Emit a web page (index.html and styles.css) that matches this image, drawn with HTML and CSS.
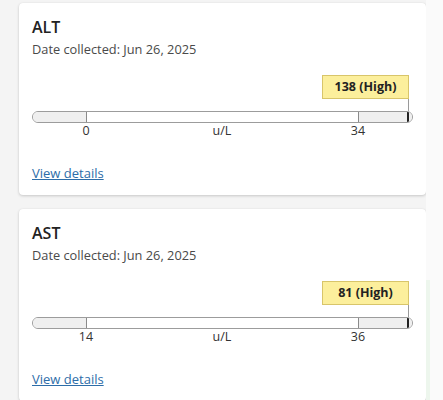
FILE: index.html
```html
<!DOCTYPE html>
<html lang="en">
<head>
<meta charset="utf-8">
<title>Lab results</title>
<link rel="stylesheet" href="styles.css">
</head>
<body>
<div class="page">
  <main class="list">
    <section class="card">
      <h2 class="title">ALT</h2>
      <p class="date">Date collected: Jun 26, 2025</p>
      <div class="gauge">
        <div class="flag-wrap">
          <div class="flag">138 (High)</div>
          <div class="stem"></div>
        </div>
        <div class="bar">
          <div class="seg seg-low"></div>
          <div class="seg seg-mid"></div>
          <div class="seg seg-high"></div>
          <div class="marker"></div>
        </div>
        <div class="labels">
          <span></span>
          <span class="tick"><span>0</span></span>
          <span class="unit">u/L</span>
          <span class="tick"><span>34</span></span>
          <span></span>
        </div>
      </div>
      <a class="details" href="#">View details</a>
    </section>
    <section class="card">
      <h2 class="title">AST</h2>
      <p class="date">Date collected: Jun 26, 2025</p>
      <div class="gauge">
        <div class="flag-wrap">
          <div class="flag">81 (High)</div>
          <div class="stem"></div>
        </div>
        <div class="bar">
          <div class="seg seg-low"></div>
          <div class="seg seg-mid"></div>
          <div class="seg seg-high"></div>
          <div class="marker"></div>
        </div>
        <div class="labels">
          <span></span>
          <span class="tick"><span>14</span></span>
          <span class="unit">u/L</span>
          <span class="tick"><span>36</span></span>
          <span></span>
        </div>
      </div>
      <a class="details" href="#">View details</a>
    </section>
  </main>
  <aside class="side"><div class="side-accent"></div></aside>
</div>
</body>
</html>
```
FILE: styles.css
```css
* { box-sizing: border-box; }
html, body { margin: 0; padding: 0; }
body {
  background: #f4f4f4;
  font-family: "Open Sans", "Liberation Sans", sans-serif;
  color: #222;
  height: 400px;
  overflow: hidden;
}
.page {
  display: flex;
  height: 400px;
}
.list {
  width: 426px;
  padding: 3px 0 0 19px;
  display: flex;
  flex-direction: column;
  gap: 14px;
}
.side {
  flex: 1;
  background: #fafafa;
  padding-top: 280px;
}
.side-accent {
  width: 4px;
  height: 120px;
  background: #edf6ed;
}
.card {
  background: #fff;
  border-radius: 4px;
  box-shadow: 0 1px 3px rgba(0,0,0,0.18), 0 0 1px rgba(0,0,0,0.08);
  padding: 13px 13px 13px 13px;
  display: flex;
  flex-direction: column;
  flex-shrink: 0;
}
.title {
  margin: 0;
  font-size: 16px;
  line-height: 22px;
  font-weight: 600;
  color: #222;
}
.date {
  margin: 2px 0 0;
  font-size: 12.8px;
  line-height: 18px;
  color: #4a4a4a;
}
.gauge {
  margin-top: 17px;
  width: 381px;
}
.flag-wrap {
  display: flex;
  flex-direction: column;
  align-items: flex-end;
  padding-right: 4px;
}
.flag {
  height: 24px;
  width: 87px;
  background: #fcef9c;
  border: 1px solid #d8c56a;
  font-size: 12.5px;
  font-weight: 700;
  line-height: 22px;
  text-align: center;
  color: #222;
}
.stem {
  width: 1px;
  height: 12px;
  background: #9a9a9a;
}
.bar {
  position: relative;
  height: 12px;
  border: 1px solid #9c9c9c;
  border-radius: 6px;
  overflow: hidden;
  display: grid;
  grid-template-columns: 53px 272px 1fr;
}
.seg-low { background: #efefef; }
.seg-mid { background: #fff; border-left: 1px solid #8a8a8a; }
.seg-high { background: #efefef; border-left: 1px solid #8a8a8a; }
.marker {
  position: absolute;
  top: 0;
  bottom: 0;
  right: 3px;
  width: 2px;
  background: #222;
}
.labels {
  display: grid;
  grid-template-columns: 54px 0 1fr 0 55px;
  font-size: 12.5px;
  line-height: 16px;
  color: #333;
}
.tick {
  display: flex;
  justify-content: center;
  white-space: nowrap;
}
.unit {
  text-align: center;
}
.details {
  margin-top: 25px;
  align-self: flex-start;
  font-size: 13px;
  line-height: 18px;
  color: #2d6da8;
  text-decoration: underline;
}
```
